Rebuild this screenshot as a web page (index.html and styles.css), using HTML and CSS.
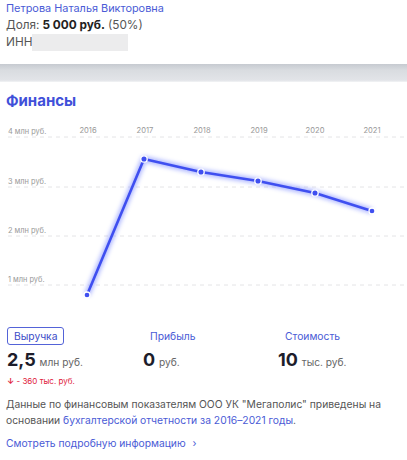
FILE: index.html
```html
<!DOCTYPE html>
<html lang="ru">
<head>
<meta charset="utf-8">
<link rel="stylesheet" href="styles.css">
</head>
<body>
<div class="owner">
  <div class="owner-name">Петрова Наталья Викторовна</div>
  <div class="owner-line">Доля: <b>5 000 руб.</b> (50%)</div>
  <div class="owner-line">ИНН<span class="inn-mask"></span></div>
</div>
<div class="band"></div>
<div class="finance">
  <h2 class="title">Финансы</h2>
  <svg class="chart" width="407" height="190" viewBox="0 118 407 190">
    <defs>
      <filter id="glow" x="-20%" y="-20%" width="140%" height="140%">
        <feGaussianBlur stdDeviation="2.2"/>
      </filter>
    </defs>
    <g class="grid">
      <line x1="8" y1="137" x2="407" y2="137"/>
      <line x1="8" y1="187" x2="407" y2="187"/>
      <line x1="8" y1="236" x2="407" y2="236"/>
      <line x1="8" y1="285" x2="407" y2="285"/>
    </g>
    <g class="ylab">
      <text x="8" y="134">4 млн руб.</text>
      <text x="8" y="184">3 млн руб.</text>
      <text x="8" y="233">2 млн руб.</text>
      <text x="8" y="282">1 млн руб.</text>
    </g>
    <g class="xlab">
      <text x="88" y="133">2016</text>
      <text x="145" y="133">2017</text>
      <text x="202" y="133">2018</text>
      <text x="259" y="133">2019</text>
      <text x="315" y="133">2020</text>
      <text x="372" y="133">2021</text>
    </g>
    <polyline class="glow" filter="url(#glow)" points="87,295 144,159 201,172 258,181 315,193 372,211"/>
    <polyline class="line" points="87,295 144,159 201,172 258,181 315,193 372,211"/>
    <g class="dots">
      <circle cx="87" cy="295" r="3"/>
      <circle cx="144" cy="159" r="3.2"/>
      <circle cx="201" cy="172" r="3.2"/>
      <circle cx="258" cy="181" r="3.2"/>
      <circle cx="315" cy="193" r="3.2"/>
      <circle cx="372" cy="211" r="3"/>
    </g>
  </svg>
  <div class="metrics">
    <div class="metric">
      <div class="tab active">Выручка</div>
      <div class="value"><b>2,5</b> млн руб.</div>
      <div class="delta"><span class="arrow">&#8595;</span> - 360 тыс. руб.</div>
    </div>
    <div class="metric">
      <div class="tab">Прибыль</div>
      <div class="value"><b>0</b> руб.</div>
    </div>
    <div class="metric">
      <div class="tab">Стоимость</div>
      <div class="value"><b>10</b> тыс. руб.</div>
    </div>
  </div>
  <p class="note">Данные по финансовым показателям ООО УК "Мегаполис" приведены на основании <span class="link">бухгалтерской отчетности за 2016–2021 годы</span>.</p>
  <div class="more">Смотреть подробную информацию <span class="chev">&#8250;</span></div>
</div>
</body>
</html>
```
FILE: styles.css
```css
* { box-sizing: border-box; }
html, body { margin: 0; padding: 0; background: #fff; }
body {
  font-family: Inter, "Noto Sans", sans-serif;
  color: #222;
  width: 407px;
  height: 460px;
  overflow: hidden;
}
.owner {
  padding: 0 6px;
  height: 64px;
  font-size: 11.8px;
  line-height: 17px;
}
.owner-name {
  color: #4a5bd6;
  font-size: 10.9px;
}
.owner-line { color: #555; display: flex; align-items: center; }
.owner-line b { color: #222; font-weight: 700; margin-left: 3px; margin-right: 3px; }
.inn-mask {
  display: inline-block;
  width: 96px;
  height: 17px;
  background: #ececed;
  margin-left: 0;
}
.band {
  height: 18px;
  background: linear-gradient(#c6cad0 0%, #d9dce0 35%, #e2e4e8 90%, #f3f4f6 100%);
}
.title {
  margin: 0;
  padding: 9px 6px 0;
  height: 36px;
  font-size: 15px;
  line-height: 20px;
  font-weight: 700;
  color: #3f50d9;
}
.chart { display: block; }
.grid line { stroke: #e4e4e6; stroke-width: 1; stroke-dasharray: 4 4; }
.ylab text { font-size: 7.4px; fill: #999; font-family: Inter, sans-serif; }
.xlab text { font-size: 7.6px; fill: #999; text-anchor: middle; font-family: Inter, sans-serif; }
.glow { fill: none; stroke: #8f9bff; stroke-width: 6; opacity: 0.7; stroke-linejoin: round; }
.line { fill: none; stroke: #3f4ff0; stroke-width: 2.6; stroke-linejoin: round; stroke-linecap: round; }
.dots circle { fill: #3f4ff0; stroke: #fff; stroke-width: 1.3; }
.metrics {
  display: grid;
  grid-template-columns: 136px 135px 136px;
  padding-left: 7px;
  margin-top: 19px;
}
.metric { display: flex; flex-direction: column; align-items: flex-start; }
.tab {
  font-size: 10.3px;
  line-height: 16px;
  color: #4a5bd6;
  padding: 0 6px;
  border: 1px solid transparent;
  border-radius: 3px;
}
.tab.active { border-color: #5363d8; color: #3c4cc8; }
.value {
  margin-top: 4px;
  font-size: 10.2px;
  color: #666;
  line-height: 22px;
}
.value b { font-size: 18px; color: #1d1d2b; font-weight: 700; margin-right: 1px; }
.delta {
  font-size: 8px;
  color: #e0213a;
  line-height: 14px;
  margin-top: 1px;
}
.arrow { font-weight: 700; }
.note {
  margin: 8px 0 0;
  padding: 0 6px;
  font-size: 10.3px;
  line-height: 16px;
  color: #555;
}
.link { color: #4a5bd6; }
.more {
  padding: 0 6px;
  margin-top: 7px;
  font-size: 10.3px;
  line-height: 16px;
  color: #4a5bd6;
}
.chev { margin-left: 4px; }
```
